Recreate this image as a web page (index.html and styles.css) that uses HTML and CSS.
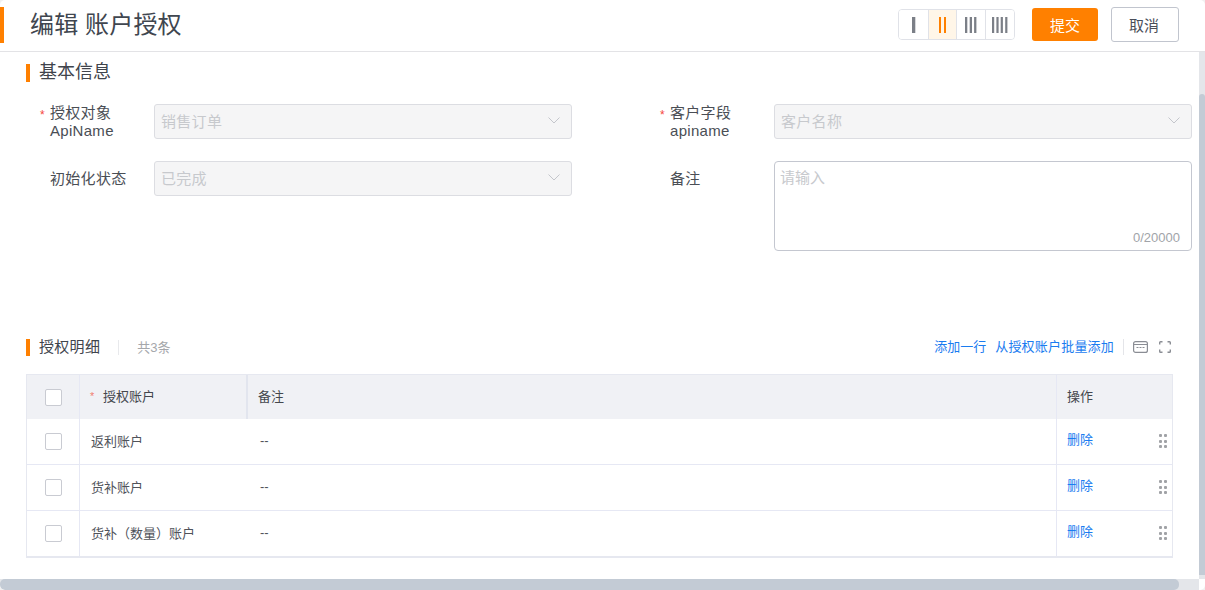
FILE: index.html
```html
<!DOCTYPE html>
<html lang="zh">
<head>
<meta charset="utf-8">
<title>编辑 账户授权</title>
<link rel="stylesheet" href="styles.css">
</head>
<body>
<div class="page">
  <header class="header">
    <div class="title-wrap"><h1 class="title">编辑 账户授权</h1></div>
    <div class="col-switch">
      <button class="col-btn"><svg width="4" height="16" viewBox="0 0 4 16"><rect x="0" width="3.3" height="16" fill="#7b7f87"/></svg></button>
      <button class="col-btn col-btn-on"><svg width="7" height="16" viewBox="0 0 7 16"><rect x="0" width="2" height="16" fill="#ff8000"/><rect x="5" width="2" height="16" fill="#ff8000"/></svg></button>
      <button class="col-btn"><svg width="12" height="16" viewBox="0 0 12 16"><rect x="0" width="2.3" height="16" fill="#7b7f87"/><rect x="4.7" width="2.3" height="16" fill="#7b7f87"/><rect x="9.1" width="2.3" height="16" fill="#7b7f87"/></svg></button>
      <button class="col-btn"><svg width="16" height="16" viewBox="0 0 16 16"><rect x="0" width="2.2" height="16" fill="#7b7f87"/><rect x="4.4" width="2.2" height="16" fill="#7b7f87"/><rect x="8.7" width="2.2" height="16" fill="#7b7f87"/><rect x="13.2" width="2.2" height="16" fill="#7b7f87"/></svg></button>
    </div>
    <button class="btn btn-primary">提交</button>
    <button class="btn btn-default">取消</button>
  </header>

  <main class="main">
    <h2 class="section-title">基本信息</h2>
    <div class="form">
      <div class="field">
        <label class="label"><span class="req">*</span>授权对象<br>ApiName</label>
        <div class="select"><span>销售订单</span><svg class="chev" width="12" height="7" viewBox="0 0 12 7"><path d="M.5.5 6 6 11.5.5" fill="none" stroke="#c4c6cc"/></svg></div>
      </div>
      <div class="field">
        <label class="label"><span class="req">*</span>客户字段<br>apiname</label>
        <div class="select"><span>客户名称</span><svg class="chev" width="12" height="7" viewBox="0 0 12 7"><path d="M.5.5 6 6 11.5.5" fill="none" stroke="#c4c6cc"/></svg></div>
      </div>
      <div class="field field-single">
        <label class="label">初始化状态</label>
        <div class="select"><span>已完成</span><svg class="chev" width="12" height="7" viewBox="0 0 12 7"><path d="M.5.5 6 6 11.5.5" fill="none" stroke="#c4c6cc"/></svg></div>
      </div>
      <div class="field field-single">
        <label class="label">备注</label>
        <div class="textarea"><span class="placeholder">请输入</span><span class="count">0/20000</span></div>
      </div>
    </div>

    <div class="table-bar">
      <h2 class="section-title section-title-sm">授权明细</h2>
      <span class="total">共3条</span>
      <div class="actions">
        <a class="link">添加一行</a>
        <a class="link link-wide">从授权账户批量添加</a>
        <span class="vline"></span>
        <svg class="tool" width="15" height="12" viewBox="0 0 15 12"><rect x=".6" y=".6" width="13.8" height="10.8" rx="2" fill="none" stroke="#8a8d94" stroke-width="1.2"/><path d="M1 3.5h13" stroke="#8a8d94"/><path d="M3.5 6.5h8" stroke="#8a8d94" stroke-dasharray="2 1"/></svg>
        <svg class="tool" width="12" height="12" viewBox="0 0 12 12"><path d="M.7 3.5V1.5a.8.8 0 0 1 .8-.8H3.5M8.5.7h2a.8.8 0 0 1 .8.8V3.5M11.3 8.5v2a.8.8 0 0 1-.8.8H8.5M3.5 11.3h-2a.8.8 0 0 1-.8-.8V8.5" fill="none" stroke="#8a8d94" stroke-width="1.4"/></svg>
      </div>
    </div>

    <div class="table">
      <div class="row row-head">
        <div class="cell c-check"><span class="check"></span></div>
        <div class="cell c-name"><span class="req req-th">*</span>授权账户</div>
        <div class="cell c-note c-note-head">备注</div>
        <div class="cell c-op">操作</div>
      </div>
      <div class="row">
        <div class="cell c-check"><span class="check"></span></div>
        <div class="cell c-name">返利账户</div>
        <div class="cell c-note">--</div>
        <div class="cell c-op"><a class="link">删除</a><span class="drag"><i></i><i></i><i></i><i></i><i></i><i></i></span></div>
      </div>
      <div class="row">
        <div class="cell c-check"><span class="check"></span></div>
        <div class="cell c-name">货补账户</div>
        <div class="cell c-note">--</div>
        <div class="cell c-op"><a class="link">删除</a><span class="drag"><i></i><i></i><i></i><i></i><i></i><i></i></span></div>
      </div>
      <div class="row">
        <div class="cell c-check"><span class="check"></span></div>
        <div class="cell c-name">货补（数量）账户</div>
        <div class="cell c-note">--</div>
        <div class="cell c-op"><a class="link">删除</a><span class="drag"><i></i><i></i><i></i><i></i><i></i><i></i></span></div>
      </div>
    </div>
  </main>

  <div class="vscroll"><div class="vthumb"></div></div>
  <div class="hscroll"><div class="hthumb"></div></div>
</div>
</body>
</html>
```
FILE: styles.css
```css
* { box-sizing: border-box; }
html, body { margin: 0; height: 100%; overflow: hidden; background: #f0f0f0; }
body { font-family: "Liberation Sans", "Noto Sans CJK SC", sans-serif; color: #333; }

.page { position: relative; width: 1205px; height: 590px; overflow: hidden; background: #fff; border-radius: 5px; }

.header {
  display: flex;
  align-items: center;
  height: 52px;
  padding: 0 26px 2px 0;
  border-bottom: 1px solid #e3e3e6;
}
.title-wrap {
  flex: 1;
  height: 36px;
  border-left: 4px solid #ff8000;
  padding-left: 26px;
  display: flex;
  align-items: center;
}
.title { margin: 0; font-size: 24px; font-weight: 400; color: #40464f; line-height: 36px; letter-spacing: .15px; }

.col-switch {
  display: flex;
  height: 31px;
  margin-right: 17px;
  border: 1px solid #e0e2e8;
  border-radius: 4px;
  overflow: hidden;
}
.col-btn {
  width: 29px;
  padding: 0;
  border: 0;
  border-left: 1px solid #e0e2e8;
  background: #fff;
  display: flex;
  align-items: center;
  justify-content: center;
}
.col-btn:first-child { border-left: 0; }
.col-btn-on { width: 28px; background: #fff6e8; }

.btn {
  height: 33px;
  padding: 0;
  border-radius: 3px;
  font: 15px "Liberation Sans", "Noto Sans CJK SC", sans-serif;
}
.btn-primary { width: 66px; margin-right: 13px; background: #ff8000; border: 0; color: #fff; }
.btn-default { width: 68px; height: 35px; padding-right: 2px; background: #fff; border: 1px solid #c1c5ce; color: #4a4e59; }

.main { padding: 12px 0 0 26px; }

.section-title {
  margin: 0;
  height: 18px;
  border-left: 4px solid #ff8000;
  padding-left: 9px;
  font-size: 18px;
  font-weight: 400;
  line-height: 16px;
  color: #40444c;
}

.form {
  display: grid;
  grid-template-columns: 546px 546px;
  column-gap: 74px;
  row-gap: 22px;
  margin: 22px 0 0 0;
  width: 1166px;
  height: 234px;
  align-content: start;
}
.field { display: flex; height: 35px; }
.label {
  position: relative;
  padding-left: 24px;
  margin-right: 24px;
  flex: 0 0 104px;
  font-size: 15px;
  letter-spacing: .3px;
  line-height: 18px;
  color: #4a4e55;
  white-space: nowrap;
}
.field-single .label { padding-top: 9px; }
.req { position: absolute; left: 14px; top: 2px; color: #f5463c; font-size: 12px; line-height: 18px; }

.select {
  flex: 1;
  height: 35px;
  padding: 0 8px 2px 6px;
  display: flex;
  align-items: center;
  justify-content: space-between;
  background: #f5f5f6;
  border: 1px solid #dcdde2;
  border-radius: 3px;
  font-size: 15px;
  letter-spacing: .3px;
  color: #c7c9cd;
}
.chev { margin-right: 3px; }

.textarea {
  position: relative;
  flex: 1;
  height: 90px;
  padding: 7px 5px;
  background: #fff;
  border: 1px solid #c4c7d0;
  border-radius: 4px;
  font-size: 15px;
  line-height: 18px;
}
.placeholder { color: #c7c9cd; }
.count { position: absolute; right: 11px; bottom: 4px; font-size: 13px; line-height: 16px; color: #a1a4a9; }

.table-bar {
  display: flex;
  align-items: center;
  width: 1146px;
  height: 18px;
}
.section-title-sm {
  font-size: 15px;
  letter-spacing: .3px;
  line-height: 16px;
  padding-right: 18px;
  height: 17px;
}
.total {
  padding-left: 18px;
  border-left: 1px solid #e8e9ec;
  font-size: 13px;
  line-height: 15px;
  color: #a5a7ab;
}
.actions { margin-left: auto; display: flex; align-items: center; }
.link { font-size: 13px; line-height: 18px; color: #1a7cf0; white-space: nowrap; }
.actions .link { margin-right: 9px; }
.link-wide { letter-spacing: .2px; }
.vline { width: 1px; height: 16px; background: #e4e5e9; margin-right: 9px; }
.tool { margin-right: 11px; display: block; }
.tool:last-child { margin-right: 1px; }

.table {
  width: 1147px;
  margin-top: 18px;
  border: 1px solid #e6e8f0;
  border-bottom-width: 2px;
}
.row {
  display: grid;
  grid-template-columns: 52px 167px 1fr 116px;
  height: 46px;
  border-bottom: 1px solid #e6e8f4;
  font-size: 13px;
  color: #50535a;
}
.row:last-child { height: 45px; border-bottom: 0; }
.row-head { height: 44px; background: #f0f1f5; border-bottom: 0; color: #44474d; }
.cell { display: flex; align-items: center; padding-left: 11px; padding-bottom: 3px; border-left: 1px solid #e6e8f4; }
.row-head .cell { padding-bottom: 4px; }
.row .cell:first-child { border-left: 0; padding-left: 0; padding-bottom: 0; justify-content: center; }
.c-note { padding-left: 14px; border-left: 0; }
.c-note-head { padding-left: 10px; border-left: 2px solid #e2e5ee; }
.c-name { position: relative; }
.row-head .c-name { padding-left: 23px; }
.req-th { left: 10px; top: 12px; font-size: 11px; color: #f08070; }

.check {
  width: 17px;
  height: 17px;
  background: #fff;
  border: 1px solid #c9cbd2;
  border-radius: 2px;
}
.c-op { position: relative; padding-left: 10px; }
.drag {
  position: absolute;
  right: 5px;
  top: 15px;
  display: grid;
  grid-template-columns: 3px 3px;
  column-gap: 2px;
  row-gap: 2.5px;
}
.drag i { display: block; width: 3px; height: 3px; background: #a0a2a6; border-radius: 1px; }

.vscroll {
  position: absolute;
  right: 0;
  top: 52px;
  width: 6px;
  height: 527px;
  background: #e4e6ea;
}
.vthumb {
  position: absolute;
  left: 0;
  top: 42px;
  width: 6px;
  height: 481px;
  background: #c3cbd5;
  border-radius: 3px 3px 0 0;
}
.hscroll {
  position: absolute;
  left: 0;
  bottom: 0;
  width: 1199px;
  height: 11px;
  background: #e4e6ea;
}
.hthumb {
  width: 1179px;
  height: 11px;
  background: #c3cbd5;
  border-radius: 5px;
}
```
